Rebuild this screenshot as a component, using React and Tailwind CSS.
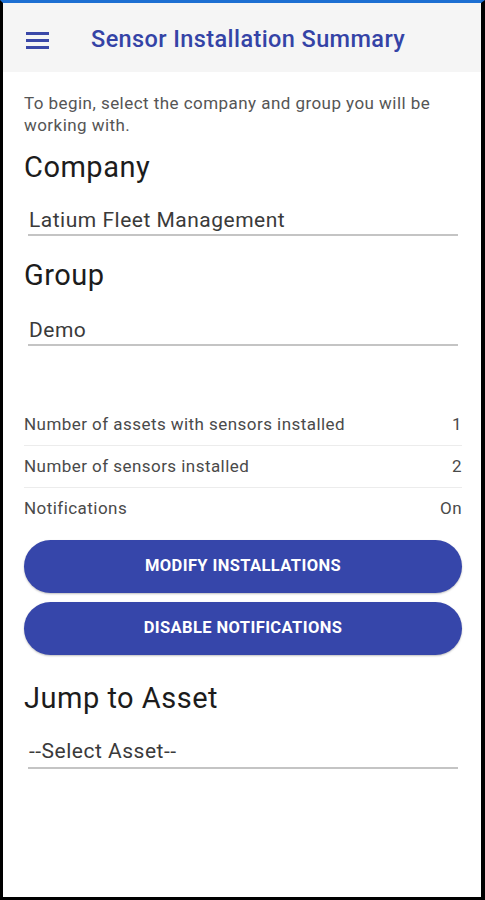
function Field({ value, className = "", tall }) {
  return (
    <div className={`mx-[4px] border-b-2 border-[#c4c4c4] ${className}`}>
      <div className={`${tall ? "h-[30px]" : "h-[28px]"} text-[21px] leading-[28px] tracking-[0.5px] text-[#3a3a3a] pl-[1px]`}>{value}</div>
    </div>
  );
}

function Row({ label, value, last }) {
  return (
    <div className={`flex h-[42px] items-center justify-between text-[17px] tracking-[0.45px] text-[#4a4a4a] ${last ? "" : "border-b border-[#ececec]"}`}>
      <span>{label}</span>
      <span>{value}</span>
    </div>
  );
}

export default function App() {
  return (
    <div
      className="w-[485px] h-[900px] bg-white border-l-[3px] border-r-[4px] border-b-[3px] border-t-[3px] border-l-black border-r-black border-b-black border-t-[#1d6fd2] flex flex-col"
      style={{ fontFamily: "Roboto, 'Liberation Sans', sans-serif" }}
    >
      <header className="h-[69px] pt-[5px] bg-[#f5f5f5] flex items-center shrink-0">
        <div className="ml-[23px] w-[23px] flex flex-col gap-[4px]">
          <span className="block h-[3px] bg-[#3a48a8]" />
          <span className="block h-[3px] bg-[#3a48a8]" />
          <span className="block h-[3px] bg-[#3a48a8]" />
        </div>
        <h1 className="ml-[42px] text-[23.5px] font-medium text-[#3443a6] tracking-[0.4px]">
          Sensor Installation Summary
        </h1>
      </header>

      <main className="pl-[21px] pr-[19px] pt-[20px]">
        <p className="text-[17px] leading-[22px] tracking-[0.45px] text-[#555]">
          To begin, select the company and group you will be working with.
        </p>

        <h2 className="mt-[14px] text-[29px] leading-[34px] tracking-[0.5px] text-[#1c1c1c]">Company</h2>
        <Field value="Latium Fleet Management" className="mt-[22px]" />

        <h2 className="mt-[22px] text-[29px] leading-[34px] tracking-[0.5px] text-[#1c1c1c]">Group</h2>
        <Field value="Demo" className="mt-[24px]" />

        <div className="mt-[58px]">
          <Row label="Number of assets with sensors installed" value="1" />
          <Row label="Number of sensors installed" value="2" />
          <Row label="Notifications" value="On" last />
        </div>

        <div className="mt-[10px] flex flex-col gap-[9px]">
          <button className="h-[53px] rounded-full bg-[#3646aa] text-white text-[16.5px] tracking-[0.4px] font-bold uppercase shadow-[0_1px_2px_rgba(0,0,0,0.25)]">
            Modify Installations
          </button>
          <button className="h-[53px] rounded-full bg-[#3646aa] text-white text-[16.5px] tracking-[0.4px] font-bold uppercase shadow-[0_1px_2px_rgba(0,0,0,0.25)]">
            Disable Notifications
          </button>
        </div>

        <h2 className="mt-[26px] text-[29px] leading-[34px] tracking-[0.5px] text-[#1c1c1c]">Jump to Asset</h2>
        <Field value="--Select Asset--" className="mt-[22px]" tall />
      </main>
    </div>
  );
}
